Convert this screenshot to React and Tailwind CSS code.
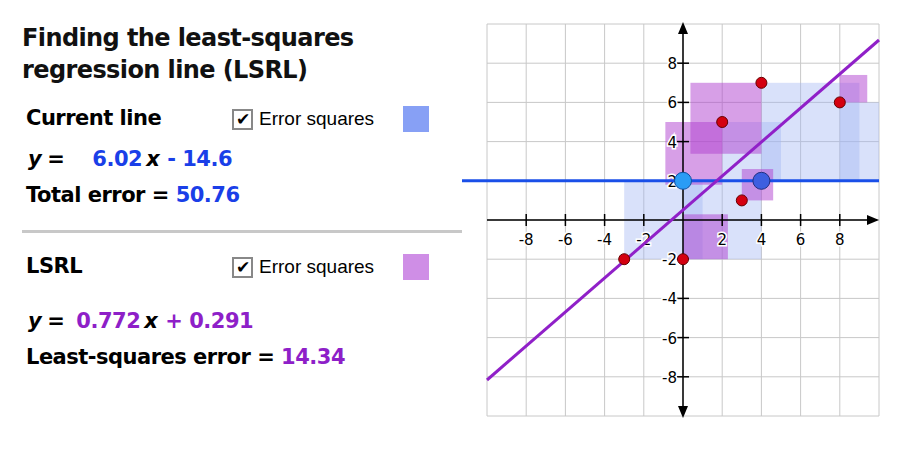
export default function App() {
  const U = 19.6;
  const px = (x) => 223 + x * U;
  const py = (y) => 220 - y * U;
  const L = px(-10), R = px(10), T = py(10), B = py(-10);
  const grid = [];
  for (let i = -10; i <= 10; i += 2) {
    grid.push(<line key={"v" + i} x1={px(i)} y1={T} x2={px(i)} y2={B} stroke="#c8c8c8" strokeWidth="1" />);
    grid.push(<line key={"h" + i} x1={L} y1={py(i)} x2={R} y2={py(i)} stroke="#c8c8c8" strokeWidth="1" />);
  }
  const rect = (x0, y0, x1, y1) => ({ x: px(Math.min(x0, x1)), y: py(Math.max(y0, y1)), width: Math.abs(x1 - x0) * U, height: Math.abs(y1 - y0) * U });
  const blue = [[-3, -2, 1, 2], [0, -2, 4, 2], [2, 2, 5, 5], [4, 2, 9, 7], [8, 2, 10, 6]];
  const purple = [[0, -2, 2.29, 0.29], [-0.9, 1.8, 2, 5], [3, 1, 4.6, 2.6], [0.38, 3.38, 4, 7], [8, 6, 9.4, 7.4]];
  const pts = [[-3, -2], [0, -2], [2, 5], [3, 1], [4, 7], [8, 6]];
  const ticks = [-8, -6, -4, -2, 2, 4, 6, 8];
  const f = { fontFamily: "'DejaVu Sans', Verdana, sans-serif" };
  const a = { fontFamily: "'Liberation Sans', Arial, sans-serif" };
  const row = "text-[21px] font-bold tracking-[-0.5px]";
  return (
    <div className="w-[906px] h-[450px] bg-white flex overflow-hidden" style={f}>
      <div className="w-[460px] shrink-0 pl-[22px] pt-[22px]">
        <div className="text-[24px] leading-[32px] font-bold tracking-[-0.6px] text-[#111]">Finding the least-squares<br />regression line (LSRL)</div>
        <div className="pl-[4px] mt-[18px]">
          <div className="flex items-center h-[30px]">
            <div className={"w-[206px] " + row}>Current line</div>
            <div className="w-[21px] h-[21px] border-2 border-[#888] bg-white flex items-center justify-center text-[17px] leading-none" style={a}>✔</div>
            <div className="ml-[6px] text-[19px] w-[144px]" style={a}>Error squares</div>
            <div className="w-[26px] h-[26px] bg-[#87a0f5]" />
          </div>
          <div className={"flex items-center h-[36px] mt-[8px] " + row}>
            <span className="italic ml-[2px]">y</span><span className="ml-[6px]">=</span>
            <span className="ml-[28px] text-[#1a3fe8]">6.02</span><span className="italic ml-[4px]">x</span><span className="ml-[8px] text-[#1a3fe8]">- 14.6</span>
          </div>
          <div className={"h-[36px] flex items-center " + row}>Total error =&nbsp;<span className="text-[#1a3fe8]">50.76</span></div>
        </div>
        <div className="h-[3px] bg-[#c8c8c8] mt-[16px] mr-[-2px]" />
        <div className="pl-[4px] mt-[19px]">
          <div className="flex items-center h-[30px]">
            <div className={"w-[206px] " + row}>LSRL</div>
            <div className="w-[21px] h-[21px] border-2 border-[#888] bg-white flex items-center justify-center text-[17px] leading-none" style={a}>✔</div>
            <div className="ml-[6px] text-[19px] w-[144px]" style={a}>Error squares</div>
            <div className="w-[26px] h-[26px] bg-[#cf8ee6]" />
          </div>
          <div className={"flex items-center h-[36px] mt-[22px] " + row}>
            <span className="italic ml-[2px]">y</span><span className="ml-[6px]">=</span>
            <span className="ml-[12px] text-[#8e1fc8]">0.772</span><span className="italic ml-[4px]">x</span><span className="ml-[8px] text-[#8e1fc8]">+ 0.291</span>
          </div>
          <div className={"h-[36px] flex items-center " + row}>Least-squares error =&nbsp;<span className="text-[#8e1fc8]">14.34</span></div>
        </div>
      </div>
      <svg width="446" height="450" className="shrink-0">
        <defs><clipPath id="c"><rect x={L} y={T} width={R - L} height={B - T} /></clipPath></defs>
        <rect x={L} y={T} width={R - L} height={B - T} fill="white" />
        {grid}
        <g clipPath="url(#c)">
          {blue.map((b, i) => <rect key={i} {...rect(...b)} fill="#9fb3f2" fillOpacity="0.4" />)}
          {purple.map((b, i) => <rect key={i} {...rect(...b)} fill="#b040d0" fillOpacity="0.5" />)}
        </g>
        <line x1={L} y1={py(0)} x2={R - 2} y2={py(0)} stroke="black" strokeWidth="1.5" />
        <polygon points={`${R},${py(0)} ${R - 12},${py(0) - 5} ${R - 12},${py(0) + 5}`} fill="black" />
        <line x1={px(0)} y1={T + 2} x2={px(0)} y2={B - 2} stroke="black" strokeWidth="1.5" />
        <polygon points={`${px(0)},${T - 2} ${px(0) - 5},${T + 10} ${px(0) + 5},${T + 10}`} fill="black" />
        <polygon points={`${px(0)},${B + 2} ${px(0) - 5},${B - 10} ${px(0) + 5},${B - 10}`} fill="black" />
        {ticks.map((t) => (
          <g key={t} style={f} fontSize="15">
            <line x1={px(t)} y1={py(0) - 6} x2={px(t)} y2={py(0) + 6} stroke="black" strokeWidth="1.5" />
            <text x={px(t)} y={py(0) + 25} textAnchor="middle" fill="black" stroke="white" strokeWidth="3" paintOrder="stroke">{t}</text>
            <line x1={px(0) - 6} y1={py(t)} x2={px(0) + 6} y2={py(t)} stroke="black" strokeWidth="1.5" />
            <text x={px(0) - 6} y={py(t) + 6} textAnchor="end" fill="black" stroke="white" strokeWidth="3" paintOrder="stroke">{t}</text>
          </g>
        ))}
        <line x1={2} y1={py(2)} x2={R} y2={py(2)} stroke="#1a4fe8" strokeWidth="3" />
        <line x1={L} y1={380} x2={R} y2={40} stroke="#9020c8" strokeWidth="3" />
        {pts.map(([x, y], i) => <circle key={i} cx={px(x)} cy={py(y)} r="5.5" fill="#d40010" stroke="#600" strokeWidth="1" />)}
        <circle cx={px(0)} cy={py(2)} r="8.5" fill="#2a9cf5" stroke="#1050a0" strokeWidth="1" />
        <circle cx={px(4)} cy={py(2)} r="8.5" fill="#3d5fe0" stroke="#203080" strokeWidth="1" />
      </svg>
    </div>
  );
}
